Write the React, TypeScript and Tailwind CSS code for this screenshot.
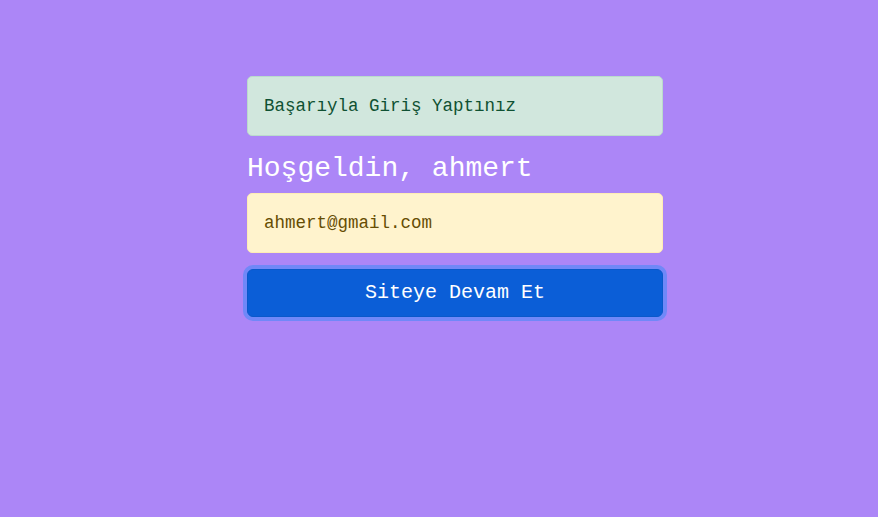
export default function App() {
  return (
    <div
      className="min-h-[517px] w-full bg-[#ac86f7] pt-[76px]"
      style={{ fontFamily: '"Liberation Mono", "Courier New", monospace' }}
    >
      <div className="ml-[247px] flex w-[416px] flex-col">
        {/* Success alert */}
        <div className="mb-4 rounded-[5px] border border-[#badbcc] bg-[#d1e7dd] px-4 py-4 text-[17.5px] leading-[26px] text-[#0f5132]">
          Başarıyla Giriş Yaptınız
        </div>

        <h3 className="mb-2 text-[28px] leading-[33px] text-white">
          Hoşgeldin, ahmert
        </h3>

        {/* Email */}
        <div className="mb-4 rounded-[5px] border border-[#ffecb5] bg-[#fff3cd] px-4 py-4 text-[17.5px] leading-[26px] text-[#664d03]">
          ahmert@gmail.com
        </div>

        <button className="h-[48px] w-full rounded-[6px] border border-[#0a58ca] bg-[#0b5ed7] text-[20px] leading-[30px] text-white shadow-[0_0_0_4px_#7088f8]">
          Siteye Devam Et
        </button>
      </div>
    </div>
  );
}
